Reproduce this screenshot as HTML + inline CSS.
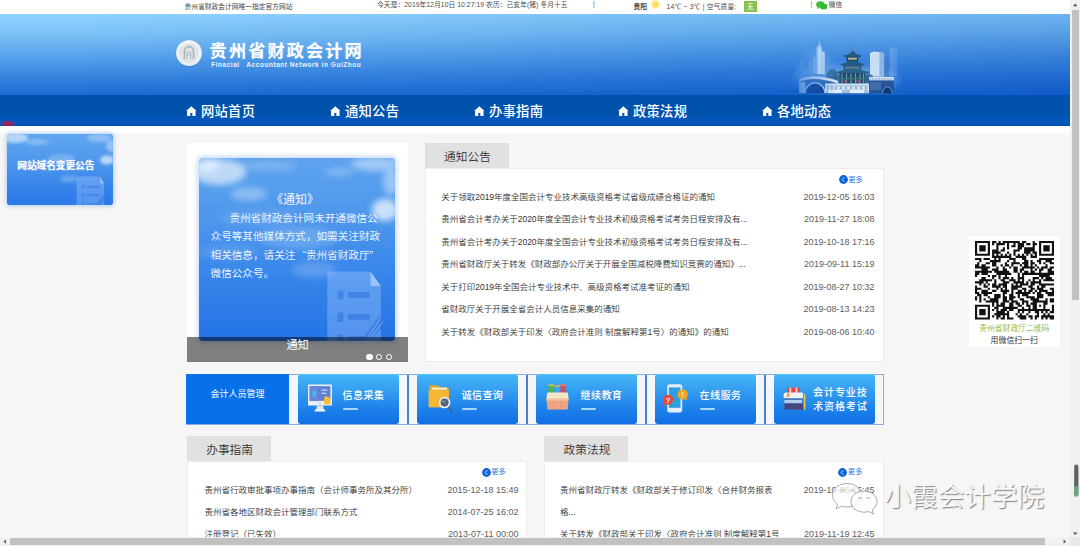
<!DOCTYPE html>
<html lang="zh-CN">
<head>
<meta charset="utf-8">
<title>贵州省财政会计网</title>
<style>
*{box-sizing:border-box;margin:0;padding:0}
html,body{width:1080px;height:546px;overflow:hidden;background:#f6f6f6}
body{position:relative;font-family:"Liberation Sans","Noto Sans CJK SC",sans-serif;color:#333;-webkit-font-smoothing:antialiased}
.abs{position:absolute}
.t{position:absolute;white-space:nowrap;line-height:1}
/* top bar */
#topbar{left:0;top:0;width:1070px;height:14px;background:#fff}
#topbar .t{font-size:6.75px;color:#444;top:3px}
/* banner */
#banner{left:0;top:14px;width:1070px;height:81px;background:linear-gradient(to bottom,#8ed3ff 0%,#7ac1f6 25%,#5ba5ec 50%,#3987e0 75%,#1b6bd3 100%)}
#nav{left:0;top:95px;width:1070px;height:31px;background:linear-gradient(to bottom,#0052ad 0%,#0052ad 64%,#0457b8 72%,#0558ba 94%,#004aa2 100%)}
#nav .t{font-size:13.3px;color:#fff;top:10.4px;letter-spacing:.3px;font-weight:500}
#strip{left:0;top:126px;width:1070px;height:9px;background:linear-gradient(to bottom,#fff 0%,#fff 60%,#f6f6f6 100%)}
/* panels */
.tab{position:absolute;height:25px;background:#e1e1e1;font-size:11.7px;color:#333;line-height:27px;padding-left:19.6px;font-weight:350;white-space:nowrap}
.panel{position:absolute;background:#fff;border:1px solid #ececec}
.row{position:absolute;font-size:8.5px;color:#333;font-weight:350;white-space:nowrap;line-height:12px}
.date{position:absolute;font-size:9px;color:#5e5e5e;white-space:nowrap;line-height:12px;text-align:right}
.more{position:absolute;font-size:7.4px;color:#2a7be0;white-space:nowrap;line-height:10px}
/* buttons */
.btn{position:absolute;top:374px;width:101px;height:50px;border-radius:3px;background:linear-gradient(to bottom,#45b4f8 0%,#2f97ef 40%,#1b7de8 75%,#0f6fe4 100%);border-top:1px solid #52c4ff}
.btn .lb{position:absolute;left:44.5px;top:15.2px;font-size:10.1px;letter-spacing:.35px;color:#fff;line-height:11px;white-space:nowrap;font-weight:500}
.btn .dash{position:absolute;left:45px;top:33.2px;width:15px;height:2px;background:#a9d6fb;border-radius:1px}
.sep{position:absolute;top:375px;width:1.5px;height:49px;background:#4d80d0}
</style>
</head>
<body>
<!-- TOPBAR -->
<div id="topbar" class="abs">
<span class="t" style="left:184.5px;top:4px">贵州省财政会计网唯一指定官方网站</span>
<span class="t" style="left:377px;top:1.9px;letter-spacing:.07px;color:#4a4a4a">今天是：2019年12月10日 10:27:19 农历：己亥年(猪) 冬月十五</span>
<span class="t" style="left:593px;top:1px;color:#666">|</span>
<span class="t" style="left:633.5px;top:3.8px;font-weight:bold">贵阳</span>
<span class="abs" style="left:650px;top:-1px;width:11px;height:11px;border-radius:50%;background:radial-gradient(circle,#f7dc55 0%,#f9e578 38%,#fdf6cf 55%,rgba(255,255,255,0) 72%)"></span>
<span class="t" style="left:666.5px;top:3.9px;letter-spacing:.2px;color:#4a4a4a">14℃ ~ 3℃ | 空气质量:</span>
<span class="t" style="left:744px;top:1px;width:12.6px;height:11.3px;background:#86c14c;color:#fff;text-align:center;line-height:11px;font-size:7px">无</span>
<span class="t" style="left:810.5px;top:1px;color:#666">|</span>
<svg class="abs" style="left:816px;top:1px" width="12" height="9" viewBox="0 0 12 9"><ellipse cx="4.3" cy="3.5" rx="4.1" ry="3.3" fill="#3ebf3a"/><ellipse cx="7.6" cy="5.4" rx="3.7" ry="3" fill="#35b833"/><path d="M1.6 6 L1 8 L3.2 6.8Z M9.6 7.9 L10.6 8.9 L10.4 7.3Z" fill="#35b833"/></svg>
<span class="t" style="left:828.8px;top:1.6px;color:#444">微信</span>
</div>
<!-- BANNER -->
<div id="banner" class="abs">
<div class="abs" style="left:0;top:0;width:1070px;height:81px;background:linear-gradient(to right,rgba(6,80,196,0) 8%,rgba(6,80,196,.16) 42%,rgba(6,80,196,.34) 65%,rgba(6,76,190,.52) 100%);-webkit-mask-image:linear-gradient(to bottom,rgba(0,0,0,.45) 0%,#000 100%);mask-image:linear-gradient(to bottom,rgba(0,0,0,.45) 0%,#000 100%)"></div>
<!-- logo -->
<svg class="abs" style="left:174px;top:24px" width="30" height="30" viewBox="0 0 30 30">
<defs><radialGradient id="lg" cx="50%" cy="45%" r="55%"><stop offset="0" stop-color="#ffffff"/><stop offset="1" stop-color="#e3ebf3"/></radialGradient></defs>
<circle cx="15" cy="15.2" r="13.4" fill="rgba(40,90,160,.25)"/>
<circle cx="15" cy="15" r="13" fill="url(#lg)"/>
<circle cx="15" cy="15" r="9" fill="#e6e4df" stroke="#cfd4d8" stroke-width=".6"/>
<path d="M10.5 21 V13.2 A4.5 4.5 0 0 1 19.5 13.2 V21" fill="none" stroke="#a3b6c8" stroke-width="1.7"/>
<path d="M13.3 21 V14.3 H16.7 V21 M13.3 17 H16.7" fill="none" stroke="#a9bccd" stroke-width="1.1"/>
</svg>
<span class="t" id="sitetitle" style="left:209.6px;top:29.4px;font-size:17.2px;font-weight:bold;letter-spacing:2.1px;color:#fff;text-shadow:0 0 2px rgba(255,255,255,.35)">贵州省财政会计网</span>
<span class="t" id="sitesub" style="left:211.2px;top:47.8px;font-size:6.5px;font-weight:bold;letter-spacing:.54px;color:#e9f3ff;white-space:pre">Finacial<span style="display:inline-block;width:2.2px"></span>  Accountant Network in GuiZhou</span>
<svg class="abs" style="left:780px;top:16px" width="140" height="65" viewBox="0 0 140 65">
<defs>
<linearGradient id="fadeL" x1="0" x2="1" y1="0" y2="0"><stop offset="0" stop-color="#fff" stop-opacity="0"/><stop offset=".2" stop-color="#fff" stop-opacity=".55"/><stop offset=".4" stop-color="#fff" stop-opacity="1"/><stop offset=".8" stop-color="#fff" stop-opacity="1"/><stop offset=".9" stop-color="#fff" stop-opacity="0"/></linearGradient>
<mask id="mk"><rect x="0" y="0" width="140" height="65" fill="url(#fadeL)"/></mask>
</defs>
<g mask="url(#mk)">
<ellipse cx="66" cy="50" rx="56" ry="15" fill="#a8cef6" opacity=".32" filter="url(#b2)"/>
<ellipse cx="36" cy="36" rx="16" ry="16" fill="#b4d6f8" opacity=".22" filter="url(#b2)"/>
<path d="M0 58 H60 V65 H0Z" fill="#0d4fae" opacity=".35" filter="url(#b1)"/>
<g filter="url(#b05)">
<!-- far left faint buildings / trees -->
<path d="M14 48 L16 36 L19 36 L20 30 L23 30 L24 40 L28 38 L30 30 L33 30 L34 44 L36 48Z" fill="#9cc6f3" opacity=".35"/>
<path d="M22 50 Q26 40 30 44 Q34 38 37 46 L38 50Z" fill="#5d93d0" opacity=".45"/>
<!-- left tall tower -->
<path d="M36.6 44 V17 L38.6 16 L39.6 10.8 L40.6 16 L41.6 17 V20.4 L44.8 22.6 V44Z" fill="#d3e6fb" opacity=".88"/>
<path d="M38.4 44 V18.6 H40.4 V44Z" fill="#f2f8ff" opacity=".75"/>
<path d="M33.6 44 V27 H35.6 V44Z" fill="#cfe3fa" opacity=".6"/>
<!-- right towers -->
<path d="M109.6 46 V19.6 L112 17.6 L117.4 18.6 V46Z" fill="#a6cbf3" opacity=".28"/>
<path d="M90 46.5 V23 L94 21.6 L102 22.4 L104.2 24 V46.5Z" fill="#d9e9fa" opacity=".92"/>
<path d="M99.4 46.5 V23 L102 22.4 L104.2 24 V46.5Z" fill="#7fadde" opacity=".85"/>
<path d="M92 25 V46 M94.4 24.4 V46 M96.8 24.4 V46" stroke="#a9c8ea" stroke-width=".6" opacity=".7"/>
<path d="M104 27 H108.4 V46.5 H104Z" fill="#3f78c0" opacity=".55"/>
<!-- trees -->
<ellipse cx="52" cy="45.6" rx="5.6" ry="6.6" fill="#2c6a8c" opacity=".75"/>
<ellipse cx="89" cy="49" rx="5" ry="5" fill="#2a6488" opacity=".7"/>
<!-- pagoda -->
<path d="M72.4 12.6 L72.9 21 H71.9Z" fill="#5a86a8"/>
<path d="M64 25.6 Q69 24.4 72.4 20.4 Q75.8 24.4 80.8 25.6 L81.6 24.6 L80.6 27 H64.2 L63.2 24.6Z" fill="#245a84"/>
<path d="M66 24.6 Q70 23.6 72.4 21" stroke="#7fb0c8" stroke-width=".5" fill="none" opacity=".8"/>
<rect x="66.6" y="26.8" width="11.6" height="4.6" fill="#173f66"/>
<rect x="68" y="27.6" width="9" height="2.2" fill="#d8cf8e" opacity=".8"/>
<path d="M60.6 34.4 Q66 33 68 30.8 H76.8 Q78.8 33 84.2 34.4 L85 33.2 L84 35.6 H60.8 L59.8 33.2Z" fill="#245a84"/>
<rect x="63.6" y="35.4" width="17.6" height="4" fill="#173f66"/>
<rect x="65" y="36.2" width="15" height="1.8" fill="#8aa29a" opacity=".6"/>
<path d="M55.6 41.8 Q62 40.6 64.6 38.4 H80.2 Q82.8 40.6 89.4 41.8 L90.4 40.4 L89.2 43.2 H55.8 L54.6 40.4Z" fill="#2a628c"/>
<path d="M56 41.4 Q62 40.4 64.8 38.6 H80 Q82.8 40.4 89 41.4" stroke="#8fc0d8" stroke-width=".5" fill="none" opacity=".7"/>
<rect x="59.4" y="43" width="26" height="10.6" fill="#1d4c6e"/>
<path d="M62 43.4 V53 M66.5 43.4 V53 M71 43.4 V53 M75.5 43.4 V53 M80 43.4 V53 M83.6 43.4 V53" stroke="#cfe0ee" stroke-width=".8" opacity=".7"/>
<rect x="59" y="47.4" width="27" height="2" fill="#3f7a7a" opacity=".7"/>
<path d="M64 50 h3 v2.4 h-3z M76 50 h3 v2.4 h-3z" fill="#b4566a" opacity=".6"/>
<ellipse cx="57" cy="49" rx="3.6" ry="4" fill="#2b6a86" opacity=".75"/><ellipse cx="87.6" cy="49.4" rx="3" ry="3.6" fill="#2b6a86" opacity=".75"/>
<!-- left bridge -->
<path d="M19 49.4 Q34 42.6 58 51 V63.6 H19Z" fill="#2f65b0" opacity=".75"/>
<path d="M19 49.2 Q34 42.4 58 50.8 L58 53.6 Q34 45.4 19 52Z" fill="#e0ecf8" opacity=".95"/>
<path d="M19 52 H25.4 V63.6 H19Z" fill="#cfe0f2" opacity=".85"/>
<path d="M26 63.6 A9 9.8 0 0 1 44 63.6Z" fill="#123f8c"/>
<path d="M25 63.6 A10 10.8 0 0 1 45 63.6" fill="none" stroke="#dbe9f8" stroke-width="1.1" opacity=".9"/>
<!-- base -->
<path d="M45 53.4 H89 V63.6 H45Z" fill="#d7e6f4"/>
<path d="M45 55.2 H89 V56.4 H45Z M46 59.4 H88 V63.6 H46Z" fill="#86aed4" opacity=".65"/>
<path d="M48 60 H62 V63.6 H48Z M70 59.8 H84 V63.6 H70Z" fill="#edf4fb" opacity=".85"/>
<path d="M47 56.8 h2 v2.2 h-2z M51 56.8 h2 v2.2 h-2z M55 56.8 h2 v2.2 h-2z M60 56.8 h2 v2.2 h-2z M65 56.8 h2 v2.2 h-2z M70 56.8 h2 v2.2 h-2z M75 56.8 h2 v2.2 h-2z M80 56.8 h2 v2.2 h-2z M85 56.8 h2 v2.2 h-2z" fill="#4a7fb4" opacity=".55"/>
<!-- right bridge -->
<path d="M89 48 H114 V64 H89Z" fill="#234f92" opacity=".9"/>
<path d="M89 47 H114 V50.4 H89Z" fill="#dde9f6" opacity=".92"/>
<path d="M90 48 v2 M93 48 v2 M96 48 v2 M99 48 v2 M102 48 v2 M105 48 v2 M108 48 v2 M111 48 v2" stroke="#6e97c8" stroke-width=".7"/>
<path d="M103 64 A4.4 6.4 0 0 1 111.8 64Z" fill="#0e387c"/>
<path d="M102.4 64 A5 7 0 0 1 112.4 64" fill="none" stroke="#9dbce2" stroke-width=".7" opacity=".8"/>
<path d="M90 52 H101 V60 H90Z" fill="#5f8cc4" opacity=".45"/>
<!-- water -->
<rect x="10" y="63" width="112" height="2" fill="#1c62c4" opacity=".7"/>
</g>
</g>
</svg>
</div>
<!-- NAV -->
<div id="nav" class="abs">
<svg class="abs" style="left:186.3px;top:10.7px" width="10.6" height="10.2" viewBox="0 0 11 11" preserveAspectRatio="none"><path d="M5.5 0.2 L10.9 5.5 H9.9 V10.8 H6.6 V7.6 H4.5 V10.8 H1.1 V5.5 H0.1Z" fill="#fff"/></svg><span class="t" style="left:200.9px">网站首页</span>
<svg class="abs" style="left:330.3px;top:10.7px" width="10.6" height="10.2" viewBox="0 0 11 11" preserveAspectRatio="none"><path d="M5.5 0.2 L10.9 5.5 H9.9 V10.8 H6.6 V7.6 H4.5 V10.8 H1.1 V5.5 H0.1Z" fill="#fff"/></svg><span class="t" style="left:344.9px">通知公告</span>
<svg class="abs" style="left:474.3px;top:10.7px" width="10.6" height="10.2" viewBox="0 0 11 11" preserveAspectRatio="none"><path d="M5.5 0.2 L10.9 5.5 H9.9 V10.8 H6.6 V7.6 H4.5 V10.8 H1.1 V5.5 H0.1Z" fill="#fff"/></svg><span class="t" style="left:488.9px">办事指南</span>
<svg class="abs" style="left:618.3px;top:10.7px" width="10.6" height="10.2" viewBox="0 0 11 11" preserveAspectRatio="none"><path d="M5.5 0.2 L10.9 5.5 H9.9 V10.8 H6.6 V7.6 H4.5 V10.8 H1.1 V5.5 H0.1Z" fill="#fff"/></svg><span class="t" style="left:632.9px">政策法规</span>
<svg class="abs" style="left:762.3px;top:10.7px" width="10.6" height="10.2" viewBox="0 0 11 11" preserveAspectRatio="none"><path d="M5.5 0.2 L10.9 5.5 H9.9 V10.8 H6.6 V7.6 H4.5 V10.8 H1.1 V5.5 H0.1Z" fill="#fff"/></svg><span class="t" style="left:776.9px">各地动态</span>
<span class="t" style="left:.8px;top:26.2px;font-size:6px;color:#d8103a;font-weight:bold;transform:scale(.8);transform-origin:0 0;letter-spacing:-.6px">未登录</span>
</div>
<div id="strip" class="abs"></div>
<svg width="0" height="0" style="position:absolute"><defs>
<filter id="b1" x="-30%" y="-30%" width="160%" height="160%"><feGaussianBlur stdDeviation="1.6"/></filter>
<filter id="b2" x="-30%" y="-30%" width="160%" height="160%"><feGaussianBlur stdDeviation="3"/></filter>
<filter id="b3" x="-30%" y="-30%" width="160%" height="160%"><feGaussianBlur stdDeviation="5"/></filter>
<filter id="b05" x="-10%" y="-10%" width="120%" height="120%"><feGaussianBlur stdDeviation=".62"/></filter>
</defs></svg>
<div class="abs" id="leftcard" style="left:6.5px;top:134px;width:106px;height:71px;border-radius:2.5px;overflow:hidden;background:linear-gradient(to bottom,#60a6ef 0%,#4b94ec 45%,#3381ea 80%,#2a79e8 100%);box-shadow:0 0 4px 1px rgba(120,170,240,.55)">
<svg class="abs" style="left:0;top:0" width="106" height="71" viewBox="0 0 106 71">
<g filter="url(#b1)" fill="#fff">
<ellipse cx="8" cy="4" rx="13" ry="5" opacity=".55"/>
<ellipse cx="30" cy="8" rx="12" ry="3" opacity=".25"/>
<ellipse cx="54" cy="25" rx="14" ry="5" opacity=".22"/>
<ellipse cx="62" cy="45" rx="9" ry="3.5" opacity=".22"/>
<ellipse cx="100" cy="26" rx="7" ry="4.5" opacity=".6"/>
<ellipse cx="92" cy="4" rx="12" ry="4" opacity=".3"/>
<ellipse cx="104" cy="12" rx="5" ry="6" opacity=".35"/>
</g>
<path d="M69.6 42.5 H93.1 L97.2 49.5 V71 H69.6Z" fill="#b9d6ff" opacity=".3"/>
<path d="M93.1 42.5 L97.2 49.5 H93.1Z" fill="#e2eeff" opacity=".4"/>
<g opacity=".5" fill="#2f78e2">
<rect x="74.5" y="51.2" width="3.3" height="3.3"/><rect x="80.3" y="51.7" width="11.9" height="2.4"/>
<rect x="74.5" y="59.4" width="3.3" height="3.3"/><rect x="80.3" y="59.9" width="11.9" height="2.4"/>
<rect x="74.5" y="68.5" width="3.3" height="2.5"/><rect x="80.3" y="69" width="8" height="2"/>
<path d="M96.5 61 L100 64 L93.5 71 H88.5Z"/>
</g>
</svg>
<span class="t" style="left:10.8px;top:26.6px;font-size:9.75px;font-weight:bold;color:#fff;letter-spacing:-.12px;text-shadow:0 0 1.5px rgba(255,255,255,.5)">网站域名变更公告</span>
</div>
<div class="abs" id="slider" style="left:187px;top:143px;width:221px;height:219px;background:#fff;overflow:hidden">
<div class="abs" style="left:12px;top:15px;width:196px;height:183px;border-radius:4px;background:linear-gradient(to bottom,#5da3ee 0%,#4c96ec 35%,#3685ea 65%,#2473e6 100%);box-shadow:0 0 5px 1.5px rgba(150,185,240,.5);overflow:hidden">
<svg class="abs" style="left:0;top:0" width="196" height="183" viewBox="0 0 196 183">
<g filter="url(#b2)" fill="#fff">
<ellipse cx="20" cy="14" rx="27" ry="13" opacity=".6"/>
<ellipse cx="8" cy="6" rx="12" ry="8" opacity=".45"/>
<ellipse cx="50" cy="36" rx="18" ry="7" opacity=".32"/>
<ellipse cx="70" cy="8" rx="28" ry="5" opacity=".2"/>
<ellipse cx="186" cy="52" rx="13" ry="11" opacity=".7"/>
<ellipse cx="176" cy="6" rx="24" ry="7" opacity=".42"/>
<ellipse cx="192" cy="24" rx="8" ry="13" opacity=".4"/>
<ellipse cx="140" cy="14" rx="14" ry="4" opacity=".25"/>
<ellipse cx="100" cy="80" rx="40" ry="11" opacity=".18"/>
<ellipse cx="115" cy="112" rx="22" ry="8" opacity=".18"/>
<ellipse cx="30" cy="94" rx="30" ry="7" opacity=".12"/>
<ellipse cx="60" cy="60" rx="40" ry="8" opacity=".1"/>
</g>
<path d="M128.3 113.5 H171.5 L181.8 128 V183 H128.3Z" fill="#b9d6ff" opacity=".32"/>
<path d="M171.5 113.5 L181.8 128 H171.5Z" fill="#e2eeff" opacity=".45"/>
<g opacity=".55" fill="#2d74e0">
<rect x="138.6" y="132.6" width="5.8" height="8.8"/><rect x="148.8" y="134" width="22" height="5.9"/>
<rect x="138.6" y="154.5" width="5.8" height="9.5"/><rect x="148.8" y="156" width="22" height="5.9"/>
<rect x="138.6" y="176.5" width="5.8" height="6.5"/><rect x="148.8" y="178" width="16" height="5"/>
<path d="M180 158.5 L187 165 L171.5 183 H161.5Z"/>
</g>
<path d="M181.5 160.5 L166.5 183 M184.5 163 L169.5 183" stroke="#9cc2fb" stroke-width="1.2" opacity=".5" fill="none"/>
</svg>
<div class="abs" style="left:0;top:34.6px;width:196px;text-align:center;font-size:12px;line-height:14px;color:#f3f8ff;white-space:nowrap;text-indent:-4px">《通知》</div>
<div class="abs" style="left:11.6px;top:51px;width:174px;font-size:10.6px;letter-spacing:0;line-height:18.3px;color:#e9f2ff;text-indent:18.8px;word-break:break-all;text-align:left">贵州省财政会计网未开通微信公<br>众号等其他媒体方式，如需关注财政<br>相关信息，请关注<span style="display:inline-block;width:1em;text-align:right;text-indent:0">“</span>贵州省财政厅<span style="display:inline-block;width:1em;text-align:left;text-indent:0">”</span><br>微信公众号。</div>
</div>
<div class="abs" style="left:0;top:194px;width:221px;height:25px;background:rgba(0,0,0,.5)">
<span class="t" style="left:0;width:221px;text-align:center;top:2.8px;font-size:11.2px;color:#fff;letter-spacing:-.3px">通知</span>
<span class="abs" style="left:179.3px;top:16.7px;width:6.6px;height:6.6px;border-radius:50%;background:#fff"></span>
<span class="abs" style="left:189.3px;top:17.2px;width:5.6px;height:5.6px;border-radius:50%;border:1px solid #fff"></span>
<span class="abs" style="left:199px;top:17.2px;width:5.6px;height:5.6px;border-radius:50%;border:1px solid #fff"></span>
</div>
</div>
<div class="tab" style="left:424.5px;top:143px;width:84.3px">通知公告</div>
<div class="panel" style="left:424.5px;top:168px;width:459px;height:194px"></div>
<span class="more" style="left:838.6px;top:174.6px"><svg style="position:absolute;left:0;top:.6px" width="9" height="9" viewBox="0 0 9 9"><circle cx="4.5" cy="4.5" r="4.4" fill="#0b63d6"/><path d="M5.3 2.3 L3.2 4.5 L5.3 6.7" fill="none" stroke="#cfe4ff" stroke-width="1"/></svg><span style="margin-left:9.6px">更多</span></span>
<span class="row" style="left:441.2px;top:190.5px">关于领取2019年度全国会计专业技术高级资格考试省级成绩合格证的通知</span><span class="date" style="left:784.5px;width:90px;top:190.5px">2019-12-05 16:03</span>
<span class="row" style="left:441.2px;top:213.0px">贵州省会计考办关于2020年度全国会计专业技术初级资格考试考务日程安排及有...</span><span class="date" style="left:784.5px;width:90px;top:213.0px">2019-11-27 18:08</span>
<span class="row" style="left:441.2px;top:235.5px">贵州省会计考办关于2020年度全国会计专业技术初级资格考试考务日程安排及有...</span><span class="date" style="left:784.5px;width:90px;top:235.5px">2019-10-18 17:16</span>
<span class="row" style="left:441.2px;top:258.0px">贵州省财政厅关于转发《财政部办公厅关于开展全国减税降费知识竞赛的通知》...</span><span class="date" style="left:784.5px;width:90px;top:258.0px">2019-09-11 15:19</span>
<span class="row" style="left:441.2px;top:280.5px">关于打印2019年全国会计专业技术中、高级资格考试准考证的通知</span><span class="date" style="left:784.5px;width:90px;top:280.5px">2019-08-27 10:32</span>
<span class="row" style="left:441.2px;top:303.0px">省财政厅关于开展全省会计人员信息采集的通知</span><span class="date" style="left:784.5px;width:90px;top:303.0px">2019-08-13 14:23</span>
<span class="row" style="left:441.2px;top:325.5px">关于转发《财政部关于印发〈政府会计准则 制度解释第1号〉的通知》的通知</span><span class="date" style="left:784.5px;width:90px;top:325.5px">2019-08-06 10:40</span>

<div class="abs" style="left:186px;top:374px;width:698px;height:51px;border:1px solid #86ade6;border-left:none;background:#f4f6fa"></div>
<div class="abs" style="left:186px;top:374px;width:103px;height:50px;background:#0870e8"><span class="t" style="left:0;width:103px;text-align:center;top:15.8px;font-size:9px;color:#fff">会计人员管理</span></div>
<div class="btn" style="left:298px"><svg class="abs" style="left:8px;top:8px" width="28" height="30" viewBox="0 0 28 30">
<rect x="2" y="1.6" width="24" height="21" rx=".8" fill="#e9eff9"/>
<rect x="3.6" y="3.2" width="20.8" height="14.6" fill="#5d7fd4"/>
<rect x="3.6" y="3.2" width="9" height="14.6" fill="#6a86d8"/>
<ellipse cx="8.3" cy="10.5" rx="1.8" ry="3.6" fill="#35c3ea"/>
<rect x="15.5" y="6.6" width="6" height="1" fill="#dfe8fb"/><rect x="15.5" y="9.8" width="5" height="1" fill="#dfe8fb"/>
<path d="M18.2 13.4 H21.6 L22.6 14.6 H24.4 V21.6 H18.2Z" fill="#fbbf2d"/>
<path d="M11 22.6 H17 L18 27 H10Z" fill="#dde3ee"/><rect x="8.6" y="26.6" width="10.8" height="1.8" rx=".6" fill="#edf1f8"/>
<circle cx="14" cy="20.2" r=".8" fill="#f0a2a2"/>
</svg><span class="lb">信息采集</span><span class="dash"></span></div>
<div class="sep" style="left:407px"></div>
<div class="btn" style="left:417px"><svg class="abs" style="left:9px;top:6.7px" width="30" height="34" viewBox="0 0 30 34">
<path d="M3.2 3.2 H12 L14 5.2 H22.4 V25 H3.2Z" fill="#e9a323"/>
<rect x="5.6" y="5.6" width="15.4" height="2" fill="#fdf3d8"/>
<path d="M2.6 8 H23 V25.4 H2.6Z" fill="#f4b733"/>
<path d="M22.4 24.2 L26 30.4" stroke="#4e5a6b" stroke-width="1.7" stroke-linecap="round" opacity=".8"/>
<circle cx="18.6" cy="20.6" r="4.9" fill="#5a6376" stroke="#e8f1fb" stroke-width="1.7"/>
<circle cx="17.4" cy="19.4" r="1.5" fill="#7b8498"/>
</svg><span class="lb">诚信查询</span><span class="dash"></span></div>
<div class="sep" style="left:526px"></div>
<div class="btn" style="left:536px"><svg class="abs" style="left:8px;top:7px" width="28" height="30" viewBox="0 0 28 30">
<rect x="4.6" y="2.4" width="5.2" height="10" rx=".8" fill="#4fb34a"/><rect x="4.6" y="2.4" width="5.2" height="1.6" fill="#d5c640"/>
<rect x="10.6" y="3.2" width="5.2" height="10" rx=".8" fill="#3aa7ea"/><rect x="10.6" y="3.2" width="5.2" height="1.6" fill="#e6b43c"/>
<rect x="16.6" y="2.4" width="5.4" height="10" rx=".8" fill="#e2475f"/><rect x="16.6" y="2.4" width="5.4" height="1.6" fill="#f0843c"/>
<path d="M3.4 10.6 H23.6 L24.6 17 H2.4Z" fill="#f8ead2"/>
<rect x="5" y="12.6" width="17" height="1.6" fill="#e8e0a8" opacity=".8"/>
<path d="M2.4 16.4 H24.6 L23.6 27.4 H3.4Z" fill="#f0a582"/>
<path d="M9.6 16.4 V27.4 M17.2 16.4 V27.4" stroke="#e8906e" stroke-width=".8"/>
<path d="M2.4 16.4 H24.6 L24.4 18.4 H2.6Z" fill="#f6c4a6"/>
</svg><span class="lb">继续教育</span><span class="dash"></span></div>
<div class="sep" style="left:645px"></div>
<div class="btn" style="left:655px"><svg class="abs" style="left:5px;top:7px" width="32" height="34" viewBox="0 0 32 34">
<rect x="7.2" y="2.2" width="15" height="28.2" rx="2.6" fill="#e6eefb"/>
<rect x="8.9" y="5.4" width="11.6" height="20.4" fill="#2b9fe2"/>
<path d="M3.6 20.6 L2.6 24.4 L7 22.6Z" fill="#e24a3d"/>
<ellipse cx="8" cy="17.7" rx="5.2" ry="5" fill="#e24a3d"/>
<path d="M25.6 14.4 L27.6 18.2 L21.8 16.6Z" fill="#f2a51f"/>
<ellipse cx="22.6" cy="12.4" rx="5.2" ry="5.2" fill="#f2a51f"/>
<text x="8" y="20.6" font-size="7.4" font-weight="bold" fill="#fff" text-anchor="middle" font-family="Liberation Sans, sans-serif">?</text>
<text x="22.6" y="15.2" font-size="7.6" font-weight="bold" fill="#fff5c8" text-anchor="middle" font-family="Liberation Sans, sans-serif">!</text>
</svg><span class="lb">在线服务</span><span class="dash"></span></div>
<div class="sep" style="left:764px"></div>
<div class="btn" style="left:774px"><svg class="abs" style="left:8px;top:9px" width="26" height="28" viewBox="0 0 26 28">
<path d="M5 3.6 H17.8 V9 H5Z" fill="#e14848"/>
<rect x="7.6" y="3.6" width="1.6" height="5.4" fill="#f7d7d2"/><rect x="13.6" y="3.6" width="1.8" height="5.4" fill="#f7d7d2"/>
<path d="M4.4 8.6 H20 A1 1 0 0 1 21 9.6 V14.4 H4.4 A2.9 2.9 0 0 1 4.4 8.6Z" fill="#edf2f9"/>
<path d="M5.4 8.8 L4.4 13.8 L6.2 12.6 L7.4 13.8 V8.8Z" fill="#f4a024"/>
<rect x="2.4" y="15.6" width="17.6" height="3.8" fill="#b4cdec"/>
<rect x="2.4" y="19.4" width="18.6" height="6.2" fill="#47477c"/>
<rect x="2.4" y="14.4" width="18.6" height="1.4" fill="#4d6fb4"/>
<rect x="21.8" y="10.2" width="1.6" height="14.4" fill="#f0c63c"/><path d="M21.8 24.6 H23.4 L22.6 26.6Z" fill="#f2dcae"/>
</svg><span class="lb" style="left:39px;top:10.8px;line-height:14px;letter-spacing:.85px;white-space:normal;width:60px">会计专业技<br>术资格考试</span></div>

<div class="tab" style="left:186.6px;top:435.5px;width:84.3px">办事指南</div>
<div class="panel" style="left:186.6px;top:460.5px;width:340px;height:90px"></div>
<span class="more" style="left:481.6px;top:467.3px"><svg style="position:absolute;left:0;top:.6px" width="9" height="9" viewBox="0 0 9 9"><circle cx="4.5" cy="4.5" r="4.4" fill="#0b63d6"/><path d="M5.3 2.3 L3.2 4.5 L5.3 6.7" fill="none" stroke="#cfe4ff" stroke-width="1"/></svg><span style="margin-left:9.6px">更多</span></span>
<span class="row" style="left:204.6px;top:483.7px">贵州省行政审批事项办事指南（会计师事务所及其分所）</span><span class="date" style="left:428.5px;width:90px;top:483.7px">2015-12-18 15:49</span>
<span class="row" style="left:204.6px;top:506.0px">贵州省各地区财政会计管理部门联系方式</span><span class="date" style="left:428.5px;width:90px;top:506.0px">2014-07-25 16:02</span>
<span class="row" style="left:204.6px;top:528.3px">注册登记（已失效）</span><span class="date" style="left:428.5px;width:90px;top:528.3px">2013-07-11 00:00</span>

<div class="tab" style="left:544px;top:435.5px;width:83.5px">政策法规</div>
<div class="panel" style="left:544px;top:460.5px;width:339.5px;height:90px"></div>
<span class="more" style="left:838.2px;top:467.3px"><svg style="position:absolute;left:0;top:.6px" width="9" height="9" viewBox="0 0 9 9"><circle cx="4.5" cy="4.5" r="4.4" fill="#0b63d6"/><path d="M5.3 2.3 L3.2 4.5 L5.3 6.7" fill="none" stroke="#cfe4ff" stroke-width="1"/></svg><span style="margin-left:9.6px">更多</span></span>
<span class="row" style="left:560px;top:483.7px">贵州省财政厅转发《财政部关于修订印发〈合并财务报表</span><span class="row" style="left:560px;top:506px">格...</span><span class="date" style="left:784.5px;width:90px;top:483.7px">2019-10-08 16:45</span>
<span class="row" style="left:560px;top:528.3px">关于转发《财政部关于印发〈政府会计准则 制度解释第1号</span><span class="date" style="left:784.5px;width:90px;top:528.3px">2019-11-19 12:45</span>

<div class="abs" style="left:968.6px;top:235.5px;width:91.4px;height:111.3px;background:#fff"></div>
<svg class="abs" style="left:975.4px;top:241px" width="79" height="78.6" preserveAspectRatio="none" viewBox="0 0 37 37" shape-rendering="auto"><path d="M0 0h7v1h-7zM8 0h2v1h-2zM11 0h1v1h-1zM13 0h8v1h-8zM22 0h2v1h-2zM27 0h1v1h-1zM30 0h7v1h-7zM0 1h1v1h-1zM6 1h1v1h-1zM8 1h1v1h-1zM10 1h4v1h-4zM15 1h1v1h-1zM18 1h1v1h-1zM20 1h3v1h-3zM24 1h2v1h-2zM27 1h2v1h-2zM30 1h1v1h-1zM36 1h1v1h-1zM0 2h1v1h-1zM2 2h3v1h-3zM6 2h1v1h-1zM10 2h1v1h-1zM15 2h1v1h-1zM17 2h2v1h-2zM20 2h3v1h-3zM27 2h1v1h-1zM30 2h1v1h-1zM32 2h3v1h-3zM36 2h1v1h-1zM0 3h1v1h-1zM2 3h3v1h-3zM6 3h1v1h-1zM10 3h1v1h-1zM13 3h1v1h-1zM15 3h1v1h-1zM20 3h2v1h-2zM23 3h5v1h-5zM30 3h1v1h-1zM32 3h3v1h-3zM36 3h1v1h-1zM0 4h1v1h-1zM2 4h3v1h-3zM6 4h1v1h-1zM8 4h3v1h-3zM12 4h2v1h-2zM18 4h3v1h-3zM23 4h5v1h-5zM30 4h1v1h-1zM32 4h3v1h-3zM36 4h1v1h-1zM0 5h1v1h-1zM6 5h1v1h-1zM8 5h4v1h-4zM15 5h1v1h-1zM18 5h1v1h-1zM23 5h3v1h-3zM27 5h2v1h-2zM30 5h1v1h-1zM36 5h1v1h-1zM0 6h7v1h-7zM8 6h1v1h-1zM10 6h1v1h-1zM12 6h1v1h-1zM14 6h1v1h-1zM16 6h1v1h-1zM18 6h1v1h-1zM20 6h1v1h-1zM22 6h1v1h-1zM24 6h1v1h-1zM26 6h1v1h-1zM28 6h1v1h-1zM30 6h7v1h-7zM8 7h9v1h-9zM19 7h5v1h-5zM26 7h3v1h-3zM0 8h3v1h-3zM4 8h3v1h-3zM9 8h1v1h-1zM11 8h1v1h-1zM16 8h3v1h-3zM22 8h2v1h-2zM30 8h7v1h-7zM2 9h1v1h-1zM7 9h5v1h-5zM15 9h1v1h-1zM18 9h1v1h-1zM23 9h2v1h-2zM26 9h1v1h-1zM29 9h2v1h-2zM33 9h3v1h-3zM1 10h1v1h-1zM5 10h2v1h-2zM8 10h2v1h-2zM14 10h1v1h-1zM17 10h4v1h-4zM22 10h3v1h-3zM26 10h2v1h-2zM30 10h1v1h-1zM32 10h1v1h-1zM35 10h2v1h-2zM0 11h2v1h-2zM3 11h2v1h-2zM8 11h2v1h-2zM12 11h1v1h-1zM14 11h2v1h-2zM17 11h1v1h-1zM21 11h1v1h-1zM23 11h2v1h-2zM26 11h1v1h-1zM28 11h1v1h-1zM33 11h1v1h-1zM0 12h7v1h-7zM10 12h1v1h-1zM13 12h1v1h-1zM16 12h1v1h-1zM18 12h2v1h-2zM22 12h6v1h-6zM29 12h1v1h-1zM31 12h3v1h-3zM35 12h2v1h-2zM3 13h3v1h-3zM8 13h3v1h-3zM13 13h2v1h-2zM18 13h2v1h-2zM21 13h2v1h-2zM26 13h1v1h-1zM28 13h1v1h-1zM30 13h2v1h-2zM34 13h2v1h-2zM0 14h8v1h-8zM9 14h7v1h-7zM18 14h2v1h-2zM21 14h1v1h-1zM23 14h2v1h-2zM26 14h2v1h-2zM30 14h1v1h-1zM34 14h3v1h-3zM0 15h2v1h-2zM3 15h3v1h-3zM10 15h7v1h-7zM20 15h1v1h-1zM22 15h15v1h-15zM0 16h1v1h-1zM6 16h1v1h-1zM8 16h2v1h-2zM11 16h1v1h-1zM14 16h1v1h-1zM20 16h1v1h-1zM22 16h1v1h-1zM30 16h5v1h-5zM3 17h2v1h-2zM8 17h1v1h-1zM11 17h1v1h-1zM13 17h3v1h-3zM17 17h1v1h-1zM20 17h3v1h-3zM27 17h3v1h-3zM31 17h1v1h-1zM33 17h3v1h-3zM2 18h6v1h-6zM9 18h1v1h-1zM12 18h2v1h-2zM16 18h3v1h-3zM20 18h1v1h-1zM22 18h1v1h-1zM25 18h1v1h-1zM27 18h1v1h-1zM30 18h1v1h-1zM32 18h5v1h-5zM0 19h4v1h-4zM5 19h1v1h-1zM9 19h1v1h-1zM13 19h3v1h-3zM18 19h5v1h-5zM24 19h1v1h-1zM26 19h5v1h-5zM2 20h1v1h-1zM4 20h1v1h-1zM6 20h1v1h-1zM8 20h2v1h-2zM11 20h4v1h-4zM17 20h1v1h-1zM19 20h1v1h-1zM21 20h4v1h-4zM26 20h2v1h-2zM30 20h7v1h-7zM0 21h1v1h-1zM4 21h2v1h-2zM8 21h4v1h-4zM13 21h2v1h-2zM17 21h5v1h-5zM25 21h2v1h-2zM29 21h1v1h-1zM31 21h2v1h-2zM0 22h3v1h-3zM6 22h1v1h-1zM10 22h1v1h-1zM12 22h1v1h-1zM14 22h1v1h-1zM17 22h3v1h-3zM22 22h2v1h-2zM26 22h2v1h-2zM29 22h3v1h-3zM35 22h2v1h-2zM0 23h1v1h-1zM3 23h3v1h-3zM8 23h2v1h-2zM12 23h4v1h-4zM17 23h1v1h-1zM20 23h2v1h-2zM23 23h1v1h-1zM25 23h2v1h-2zM28 23h1v1h-1zM30 23h4v1h-4zM36 23h1v1h-1zM0 24h2v1h-2zM3 24h5v1h-5zM13 24h2v1h-2zM17 24h1v1h-1zM19 24h7v1h-7zM27 24h1v1h-1zM29 24h2v1h-2zM33 24h4v1h-4zM1 25h2v1h-2zM4 25h2v1h-2zM9 25h3v1h-3zM13 25h1v1h-1zM16 25h2v1h-2zM20 25h1v1h-1zM22 25h3v1h-3zM29 25h3v1h-3zM34 25h3v1h-3zM0 26h1v1h-1zM2 26h1v1h-1zM6 26h1v1h-1zM9 26h3v1h-3zM13 26h2v1h-2zM16 26h3v1h-3zM20 26h1v1h-1zM24 26h4v1h-4zM29 26h3v1h-3zM0 27h1v1h-1zM2 27h1v1h-1zM4 27h1v1h-1zM7 27h4v1h-4zM13 27h2v1h-2zM16 27h2v1h-2zM21 27h2v1h-2zM26 27h4v1h-4zM33 27h1v1h-1zM35 27h2v1h-2zM2 28h1v1h-1zM5 28h6v1h-6zM13 28h3v1h-3zM17 28h3v1h-3zM22 28h3v1h-3zM27 28h7v1h-7zM35 28h2v1h-2zM8 29h1v1h-1zM10 29h1v1h-1zM12 29h2v1h-2zM16 29h2v1h-2zM19 29h2v1h-2zM22 29h1v1h-1zM24 29h1v1h-1zM26 29h3v1h-3zM32 29h2v1h-2zM0 30h7v1h-7zM8 30h1v1h-1zM10 30h4v1h-4zM16 30h2v1h-2zM20 30h2v1h-2zM24 30h2v1h-2zM27 30h2v1h-2zM30 30h1v1h-1zM32 30h1v1h-1zM36 30h1v1h-1zM0 31h1v1h-1zM6 31h1v1h-1zM9 31h2v1h-2zM13 31h7v1h-7zM22 31h1v1h-1zM25 31h1v1h-1zM27 31h2v1h-2zM32 31h1v1h-1zM36 31h1v1h-1zM0 32h1v1h-1zM2 32h3v1h-3zM6 32h1v1h-1zM8 32h1v1h-1zM10 32h1v1h-1zM12 32h3v1h-3zM16 32h2v1h-2zM20 32h15v1h-15zM36 32h1v1h-1zM0 33h1v1h-1zM2 33h3v1h-3zM6 33h1v1h-1zM10 33h4v1h-4zM15 33h1v1h-1zM20 33h1v1h-1zM22 33h1v1h-1zM25 33h1v1h-1zM28 33h2v1h-2zM31 33h1v1h-1zM33 33h1v1h-1zM35 33h2v1h-2zM0 34h1v1h-1zM2 34h3v1h-3zM6 34h1v1h-1zM9 34h7v1h-7zM19 34h1v1h-1zM21 34h1v1h-1zM24 34h1v1h-1zM29 34h1v1h-1zM32 34h1v1h-1zM34 34h1v1h-1zM0 35h1v1h-1zM6 35h1v1h-1zM8 35h1v1h-1zM10 35h2v1h-2zM13 35h1v1h-1zM15 35h1v1h-1zM20 35h4v1h-4zM25 35h2v1h-2zM28 35h2v1h-2zM31 35h6v1h-6zM0 36h7v1h-7zM10 36h1v1h-1zM12 36h2v1h-2zM15 36h3v1h-3zM21 36h3v1h-3zM26 36h1v1h-1zM28 36h1v1h-1zM31 36h1v1h-1zM33 36h1v1h-1zM35 36h2v1h-2z" fill="#111"/></svg>
<span class="t" style="left:968.6px;width:91.4px;text-align:center;top:325px;font-size:7.8px;color:#8cc152">贵州省财政厅二维码</span>
<span class="t" style="left:968.6px;width:91.4px;text-align:center;top:336.5px;font-size:7.9px;color:#333">用微信扫一扫</span>

<svg class="abs" style="left:830px;top:480px" width="52" height="38" viewBox="0 0 52 38">
<g fill="rgba(252,252,252,.8)" stroke="#a6a6a6" stroke-width="1" opacity=".95">
<path d="M17 3.5 C8.5 3.5 2.5 8.8 2.5 15.2 C2.5 18.9 4.5 22 7.6 24.2 L6 29 L11.6 26.2 C13.3 26.7 15.1 27 17 27 C25.5 27 31.5 21.6 31.5 15.2 C31.5 8.8 25.5 3.5 17 3.5Z"/>
<path d="M34 11 C26.5 11 21 15.8 21 21.6 C21 27.4 26.5 32.2 34 32.2 C35.6 32.2 37.2 32 38.6 31.5 L43.6 34.2 L42.3 29.8 C45.2 27.9 47 24.9 47 21.6 C47 15.8 41.5 11 34 11Z"/>
</g>
<g fill="none" stroke="#a8a8a8" stroke-width="1"><path d="M11 11.5 a1.6 1.8 0 0 1 3.2 0 M20.5 11.5 a1.6 1.8 0 0 1 3.2 0 M28.6 19 a1.4 1.5 0 0 1 2.8 0 M37 19 a1.4 1.5 0 0 1 2.8 0"/></g>
</svg>
<span class="t" style="left:884.5px;top:484.2px;font-size:26.6px;color:#f9f9f9;letter-spacing:0;text-shadow:1px 1px 1.2px rgba(0,0,0,.5),-0.5px -0.5px 0 rgba(255,255,255,.9);font-weight:350">小霞会计学院</span>

<div class="abs" style="left:1070px;top:0;width:10px;height:546px;background:#f1f1f1"></div>
<div class="abs" style="left:1072px;top:9.5px;width:7px;height:290px;background:#c1c1c1"></div>
<svg class="abs" style="left:1070px;top:0" width="10" height="546" viewBox="0 0 10 546"><path d="M3 6.2 L5.2 3.6 L7.4 6.2Z M3 532.5 L5.2 535 L7.4 532.5Z" fill="#555"/>
<rect x="4.2" y="464.6" width="4.2" height="32" rx="2.1" fill="#5c6360"/><rect x="4.2" y="486" width="4.2" height="10.6" rx="2.1" fill="#6aa982"/></svg>
<div class="abs" style="left:0;top:537px;width:1070px;height:9px;background:#f1f1f1"></div>
<div class="abs" style="left:10px;top:538.4px;width:1034.5px;height:6.8px;background:#c1c1c1"></div>
<svg class="abs" style="left:0;top:537px" width="1070" height="9" viewBox="0 0 1070 9"><path d="M6 2.4 L3.6 4.6 L6 6.8Z M1063.6 2.4 L1066 4.6 L1063.6 6.8Z" fill="#555"/></svg>
<div class="abs" style="left:1070px;top:537px;width:10px;height:9px;background:#e9e9e9"></div>

</body>
</html>
